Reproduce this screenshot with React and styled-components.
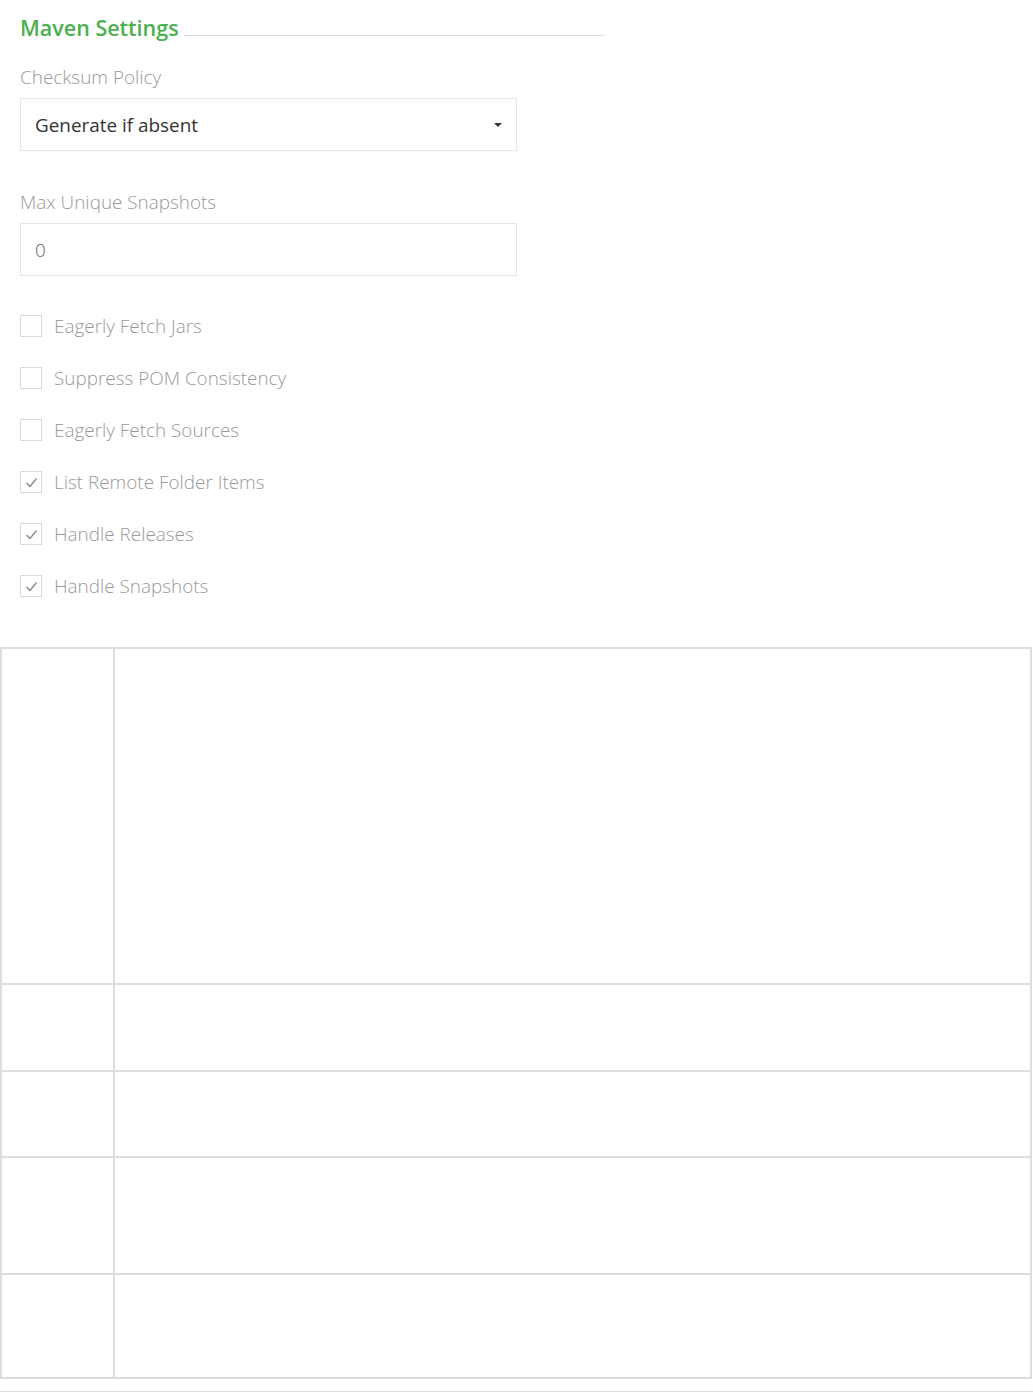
import React from "react";
import styled, { createGlobalStyle } from "styled-components";

const Global = createGlobalStyle`
  html, body { margin: 0; padding: 0; background: #fff; }
  body { font-family: "Open Sans", "Liberation Sans", sans-serif; }
  * { box-sizing: border-box; }
`;

const Page = styled.div`
  width: 1033px;
  display: flex;
  flex-direction: column;
`;

const Form = styled.section`
  width: 605px;
  padding: 14px 0 0 20px;
  display: flex;
  flex-direction: column;
`;

const Heading = styled.div`
  display: flex;
  align-items: flex-end;
  gap: 5px;
  margin-bottom: 23px;
`;

const HeadingText = styled.h3`
  margin: 0;
  font-size: 21.5px;
  line-height: 28px;
  font-weight: 600;
  color: #4caf50;
`;

const HeadingRule = styled.div`
  flex: 1;
  height: 1px;
  background: #ddd;
  margin-bottom: 6px;
`;

const Field = styled.div`
  display: flex;
  flex-direction: column;
  width: 497px;
  margin-bottom: ${(p) => p.$gap}px;
`;

const Label = styled.label`
  font-size: 18.9px;
  font-weight: 300;
  color: #999;
  line-height: 24px;
  margin-bottom: 9px;
`;

const Box = styled.div`
  height: 53px;
  border: 1px solid #e5e5e5;
  display: flex;
  align-items: center;
  justify-content: space-between;
  padding: 0 14px 0 14px;
  font-size: 18.9px;
  color: ${(p) => (p.$muted ? "#666" : "#333")};
  font-weight: ${(p) => (p.$muted ? 300 : 400)};
`;

const Caret = styled.span`
  width: 0;
  height: 0;
  border-left: 4px solid transparent;
  border-right: 4px solid transparent;
  border-top: 4px solid #333;
`;

const Checks = styled.div`
  display: flex;
  flex-direction: column;
`;

const CheckRow = styled.div`
  display: flex;
  align-items: center;
  gap: 12px;
  height: 52px;
  font-size: 18.9px;
  font-weight: 300;
  color: #999;
`;

const CheckBox = styled.span`
  width: 22px;
  height: 22px;
  border: 1px solid #d9d9d9;
  display: flex;
  align-items: center;
  justify-content: center;
  background: #fff;
`;

const Table = styled.div`
  margin-top: 35px;
  width: 1032px;
  display: grid;
  grid-template-columns: 113px 1fr;
  border-top: 2px solid #ddd;
  border-left: 2px solid #ddd;
`;

const Cell = styled.div`
  height: ${(p) => p.$h}px;
  border-right: 2px solid #ddd;
  border-bottom: 2px solid #ddd;
`;

const BottomRule = styled.div`
  margin-top: 12px;
  width: 1033px;
  height: 1px;
  background: #ddd;
`;

const Check = () => (
  <svg width="15" height="15" viewBox="0 0 15 15">
    <polyline points="2.5,8 6,11.5 12.5,3.5" fill="none" stroke="#888" strokeWidth="1.3" />
  </svg>
);

const options = [
  ["Eagerly Fetch Jars", false],
  ["Suppress POM Consistency", false],
  ["Eagerly Fetch Sources", false],
  ["List Remote Folder Items", true],
  ["Handle Releases", true],
  ["Handle Snapshots", true],
];

const rows = [336, 87, 86, 117, 104];

export default function App() {
  return (
    <Page>
      <Global />
      <Form>
        <Heading>
          <HeadingText>Maven Settings</HeadingText>
          <HeadingRule />
        </Heading>
        <Field $gap={39}>
          <Label>Checksum Policy</Label>
          <Box>
            <span>Generate if absent</span>
            <Caret />
          </Box>
        </Field>
        <Field $gap={24}>
          <Label>Max Unique Snapshots</Label>
          <Box $muted>0</Box>
        </Field>
        <Checks>
          {options.map(([t, c]) => (
            <CheckRow key={t}>
              <CheckBox>{c && <Check />}</CheckBox>
              <span>{t}</span>
            </CheckRow>
          ))}
        </Checks>
      </Form>
      <Table>
        {rows.map((h, i) => (
          <React.Fragment key={i}>
            <Cell $h={h} />
            <Cell $h={h} />
          </React.Fragment>
        ))}
      </Table>
      <BottomRule />
    </Page>
  );
}
